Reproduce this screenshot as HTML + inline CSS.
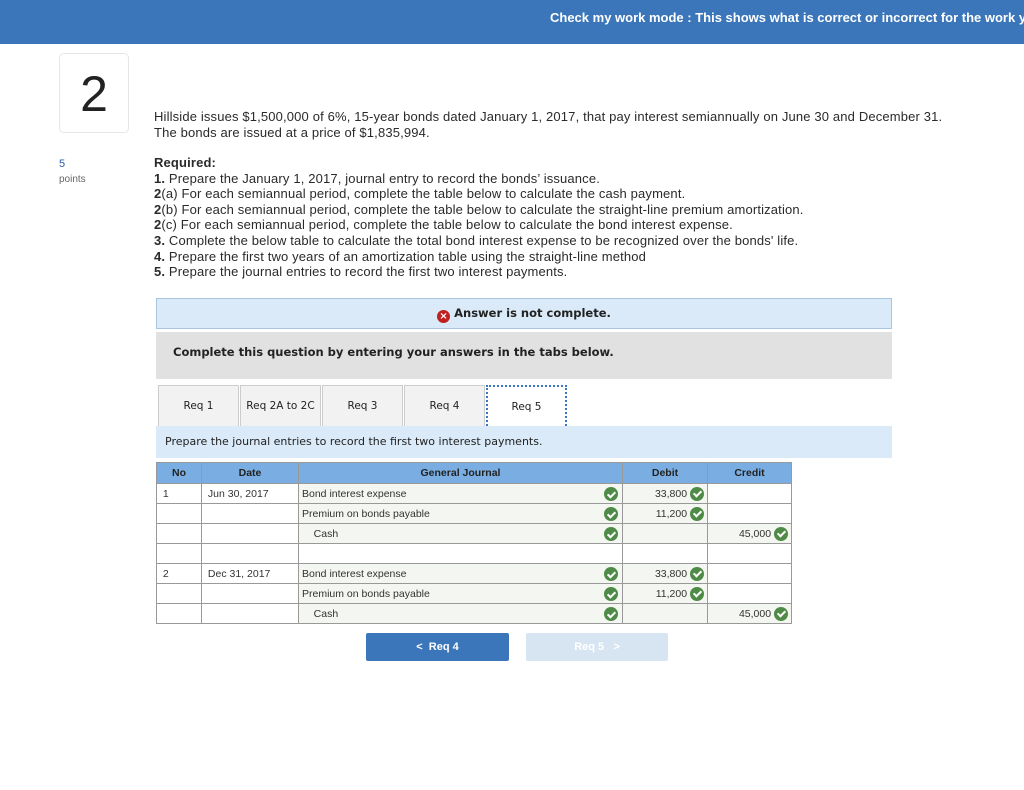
<!DOCTYPE html>
<html><head><style>
*{margin:0;padding:0;box-sizing:border-box}
body{width:1024px;height:790px;background:#fff;position:relative;overflow:hidden;font-family:"Liberation Sans",sans-serif;color:#222}
.a{position:absolute}
.top{left:0;top:0;width:1024px;height:44px;background:#3a76b9;overflow:hidden}
.top span{position:absolute;left:550px;top:10px;width:474px;overflow:hidden;color:#fff;font-weight:bold;font-size:13px;white-space:nowrap}
.num{left:59px;top:53px;width:70px;height:80px;border:1px solid #e6e6e6;border-radius:5px;font-size:50px;text-align:center;line-height:80px;color:#222}
.q{left:154px;font-size:13px;letter-spacing:0.15px;line-height:15.6px;color:#2a2a2a;white-space:nowrap}
.v{font-family:"DejaVu Sans",sans-serif}
.tab{top:385px;height:41px;width:81px;background:#f2f2f2;border:1px solid #ccc;border-bottom:none;font-size:10.5px;text-align:center;line-height:41px}
table{border-collapse:collapse;font-size:10.5px;color:#333}
td,th{border:1px solid #999;height:20px;padding:0 3px;position:relative;vertical-align:middle}
th{background:#7aaee3;font-weight:bold;height:21px;color:#222}
td.c{background:#f4f6f1}
.ck{display:inline-block;width:14px;height:14px;border-radius:50%;background:#4e8b46;vertical-align:middle;position:relative}
.ck:after{content:"";position:absolute;left:4.5px;top:2.5px;width:3px;height:6px;border:solid #fff;border-width:0 2px 2px 0;transform:rotate(45deg)}
.ck.f{position:absolute;right:4px;top:3px}
.r{text-align:right}
</style></head><body>
<div class="a top"><span>Check my work mode : This shows what is correct or incorrect for the work you have completed so far.</span></div>
<div class="a num">2</div>
<div class="a" style="left:59px;top:158px;font-size:11px;color:#2a5ea8">5</div>
<div class="a" style="left:59px;top:174px;font-size:10px;color:#666">points</div>
<div class="a q" style="top:109px">Hillside issues $1,500,000 of 6%, 15-year bonds dated January 1, 2017, that pay interest semiannually on June 30 and December 31.<br>The bonds are issued at a price of $1,835,994.</div>
<div class="a q" style="top:155px"><b>Required:</b><br><b>1.</b> Prepare the January 1, 2017, journal entry to record the bonds’ issuance.<br><b>2</b>(a) For each semiannual period, complete the table below to calculate the cash payment.<br><b>2</b>(b) For each semiannual period, complete the table below to calculate the straight-line premium amortization.<br><b>2</b>(c) For each semiannual period, complete the table below to calculate the bond interest expense.<br><b>3.</b> Complete the below table to calculate the total bond interest expense to be recognized over the bonds' life.<br><b>4.</b> Prepare the first two years of an amortization table using the straight-line method<br><b>5.</b> Prepare the journal entries to record the first two interest payments.</div>
<div class="a v" style="left:156px;top:298px;width:736px;height:31px;background:#daeaf8;border:1px solid #a9c5e0;font-size:11.5px;font-weight:bold;text-align:center;line-height:29px"><span style="display:inline-block;width:13px;height:13px;border-radius:50%;background:#c0201f;color:#fff;font-size:10px;line-height:13px;vertical-align:-2px">×</span> Answer is not complete.</div>
<div class="a v" style="left:156px;top:332px;width:736px;height:47px;background:#e1e1e1;font-size:11.5px;font-weight:bold;padding-left:17px;line-height:40px">Complete this question by entering your answers in the tabs below.</div>
<div class="a tab v" style="left:158px">Req 1</div>
<div class="a tab v" style="left:240px">Req 2A to 2C</div>
<div class="a tab v" style="left:322px">Req 3</div>
<div class="a tab v" style="left:404px">Req 4</div>
<div class="a tab v" style="left:486px;background:#fff;border:2px dotted #3a76c8;border-bottom:none">Req 5</div>
<div class="a v" style="left:156px;top:426px;width:736px;height:32px;background:#daeaf8;font-size:11px;padding-left:9px;line-height:32px">Prepare the journal entries to record the first two interest payments.</div>
<table class="a" style="left:156px;top:462px;width:636px">
<tr><th style="width:45px">No</th><th style="width:97px">Date</th><th style="width:324px">General Journal</th><th style="width:85px">Debit</th><th>Credit</th></tr>
<tr><td>&nbsp;1</td><td>&nbsp;Jun 30, 2017</td><td class="c">Bond interest expense<span class="ck f"></span></td><td class="r c">33,800 <span class="ck"></span></td><td></td></tr>
<tr><td></td><td></td><td class="c">Premium on bonds payable<span class="ck f"></span></td><td class="r c">11,200 <span class="ck"></span></td><td></td></tr>
<tr><td></td><td></td><td class="c">&nbsp;&nbsp;&nbsp;&nbsp;Cash<span class="ck f"></span></td><td class="c"></td><td class="r c">45,000 <span class="ck"></span></td></tr>
<tr><td></td><td></td><td></td><td></td><td></td></tr>
<tr><td>&nbsp;2</td><td>&nbsp;Dec 31, 2017</td><td class="c">Bond interest expense<span class="ck f"></span></td><td class="r c">33,800 <span class="ck"></span></td><td></td></tr>
<tr><td></td><td></td><td class="c">Premium on bonds payable<span class="ck f"></span></td><td class="r c">11,200 <span class="ck"></span></td><td></td></tr>
<tr><td></td><td></td><td class="c">&nbsp;&nbsp;&nbsp;&nbsp;Cash<span class="ck f"></span></td><td class="c"></td><td class="r c">45,000 <span class="ck"></span></td></tr>
</table>
<div class="a" style="left:366px;top:633px;width:143px;height:28px;background:#3a76b9;border-radius:2px;color:#fff;font-size:11px;font-weight:bold;text-align:center;line-height:28px">&lt;&nbsp;&nbsp;Req 4</div>
<div class="a" style="left:526px;top:633px;width:142px;height:28px;background:#d7e4f2;border-radius:2px;color:#fff;font-size:11px;font-weight:bold;text-align:center;line-height:28px">Req 5&nbsp;&nbsp;&nbsp;&gt;</div>
</body></html>
